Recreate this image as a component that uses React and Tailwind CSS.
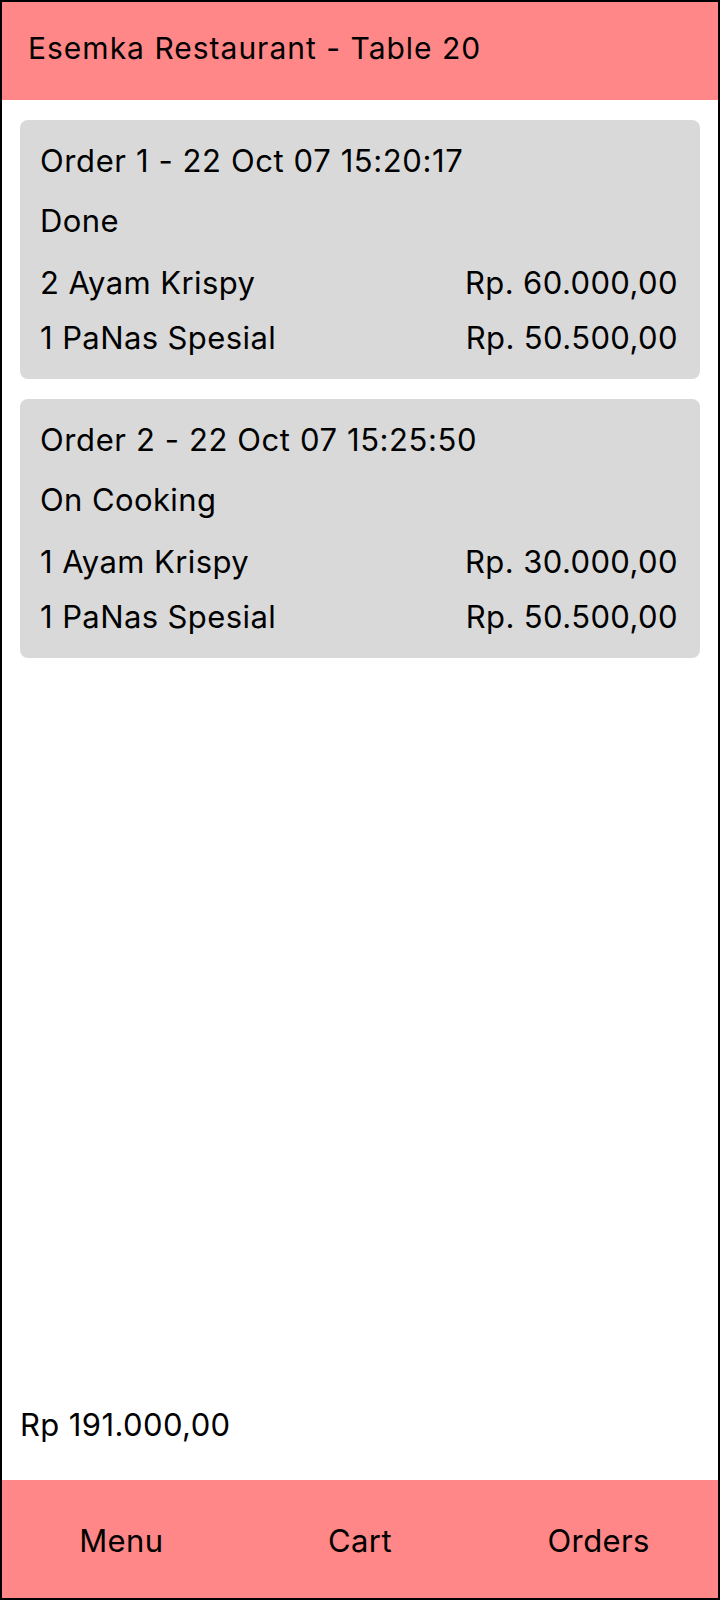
import React from 'react';

const orders = [
  {
    title: 'Order 1 - 22 Oct 07 15:20:17',
    status: 'Done',
    items: [
      { name: '2 Ayam Krispy', price: 'Rp. 60.000,00' },
      { name: '1 PaNas Spesial', price: 'Rp. 50.500,00' },
    ],
  },
  {
    title: 'Order 2 - 22 Oct 07 15:25:50',
    status: 'On Cooking',
    items: [
      { name: '1 Ayam Krispy', price: 'Rp. 30.000,00' },
      { name: '1 PaNas Spesial', price: 'Rp. 50.500,00' },
    ],
  },
];

const OrderCard = ({ order }) => (
  <div className="bg-[#d9d9d9] rounded-lg px-5 py-5">
    <p className="h-[42px] leading-[42px] tracking-[0.6px]">{order.title}</p>
    <p className="h-[42px] leading-[42px] mt-[18px]">{order.status}</p>
    {order.items.map((item, i) => (
      <div
        key={i}
        className={`flex justify-between h-[42px] leading-[42px] pr-[2px] ${i === 0 ? 'mt-5' : 'mt-[13px]'}`}
      >
        <span>{item.name}</span>
        <span>{item.price}</span>
      </div>
    ))}
  </div>
);

export default function App() {
  return (
    <div
      className="h-[1600px] w-[720px] border-2 border-black bg-white flex flex-col text-black text-[31px] tracking-[0.4px]"
      style={{ fontFamily: 'Inter, "Noto Sans", sans-serif' }}
    >
      {/* Header */}
      <div className="h-[98px] bg-[#ff8787] flex items-center pl-[26px] pb-[6px]">
        <h1 className="text-[30px] tracking-[1px] leading-[42px]">Esemka Restaurant - Table 20</h1>
      </div>

      {/* Orders */}
      <div className="flex-1 flex flex-col gap-5 px-[18px] pt-5">
        {orders.map((order, i) => (
          <OrderCard key={i} order={order} />
        ))}
      </div>

      {/* Total */}
      <div className="px-[18px] pb-[34px] leading-[42px]">Rp 191.000,00</div>

      {/* Bottom nav */}
      <div className="h-[118px] bg-[#ff8787] grid grid-cols-3 items-center text-center pt-1">
        <span>Menu</span>
        <span>Cart</span>
        <span>Orders</span>
      </div>
    </div>
  );
}
